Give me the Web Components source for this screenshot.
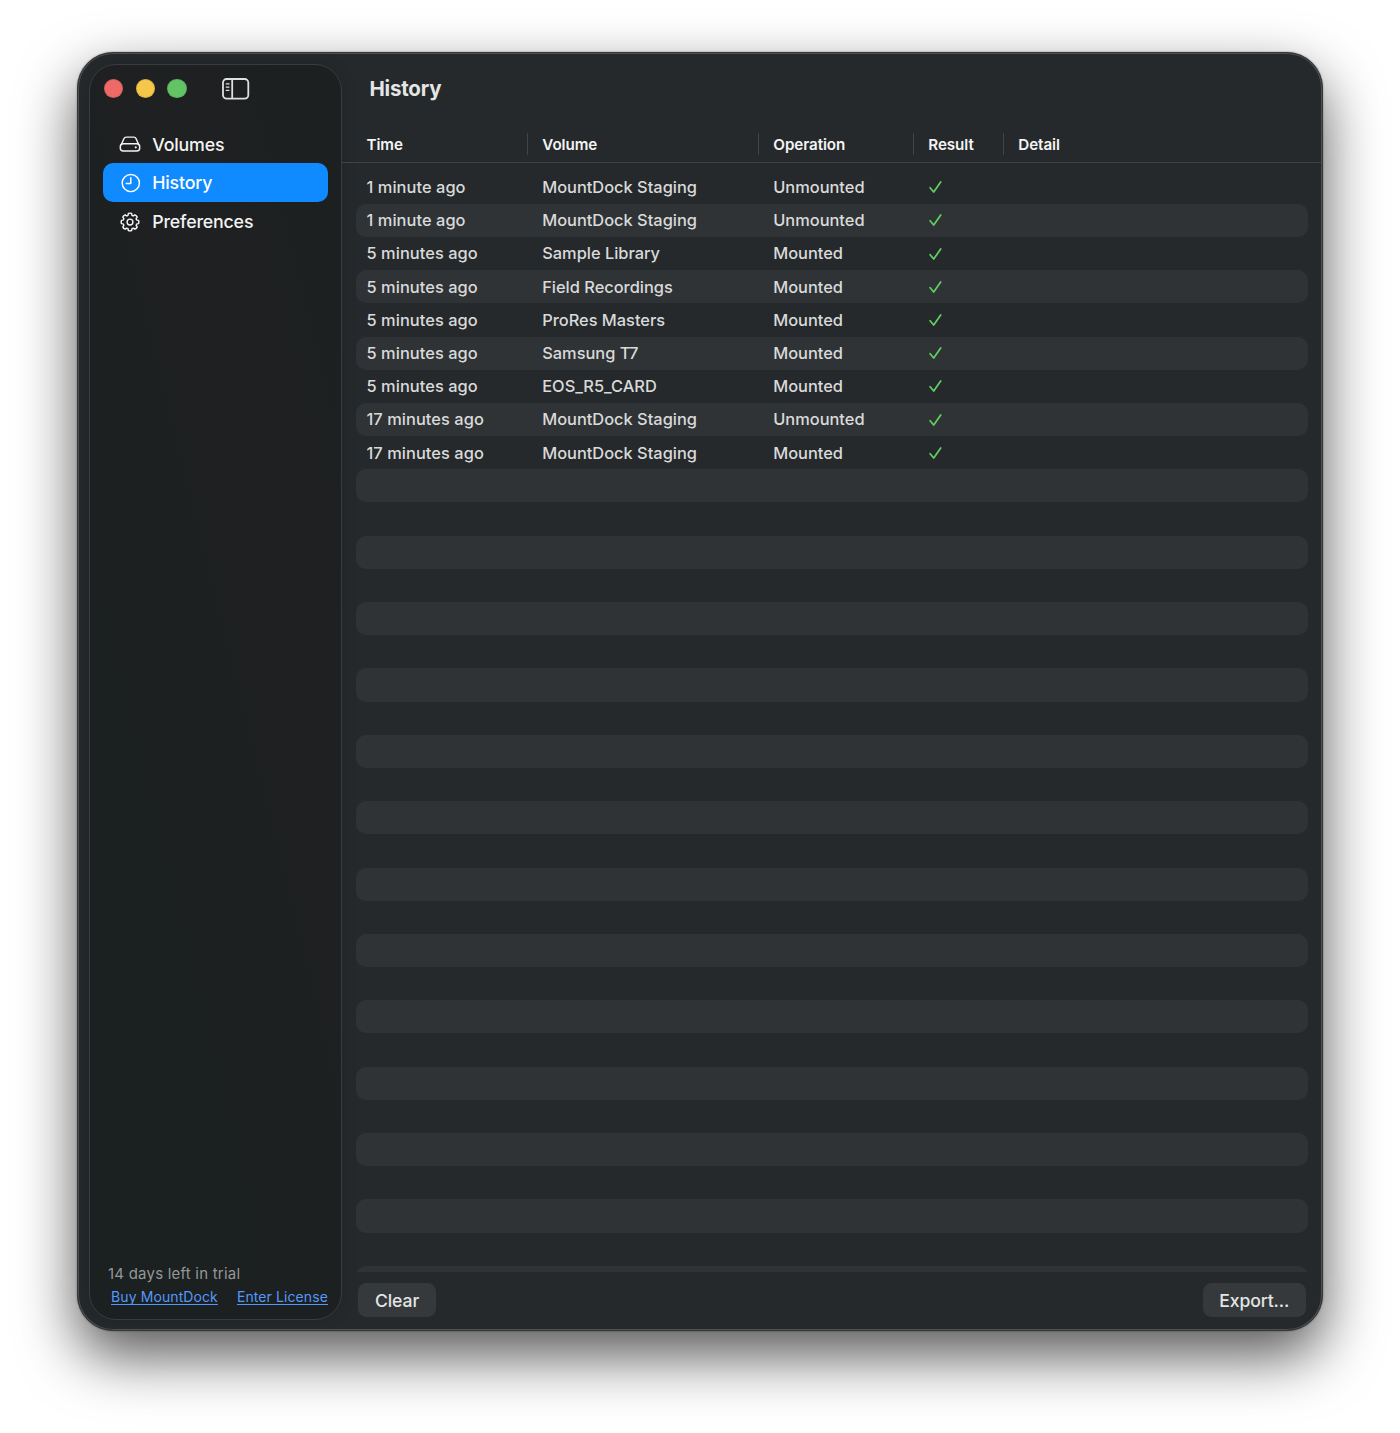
<!DOCTYPE html>
<html lang="en">
<head>
<meta charset="utf-8">
<title>MountDock</title>
<style>
html,body{margin:0;background:#fff}
body{width:1400px;height:1433px;overflow:hidden;font-family:Inter,"Liberation Sans",sans-serif;color:#dedfdf;-webkit-font-smoothing:antialiased}
</style>
</head>
<body>
<app-window>
  <side-bar slot="sidebar">
    <side-item icon="drive">Volumes</side-item>
    <side-item icon="clock" selected>History</side-item>
    <side-item icon="gear">Preferences</side-item>
    <trial-note slot="footer"></trial-note>
  </side-bar>
  <span slot="title">History</span>
  <history-table></history-table>
  <push-button slot="actions" style="--w:77.5px">Clear</push-button>
  <push-button slot="actions" style="--w:102.5px">Export...</push-button>
</app-window>
<script>
const define = (name, html, init) => customElements.define(name, class extends HTMLElement {
  constructor() {
    super();
    this.attachShadow({mode: 'open'}).innerHTML = html;
  }
  connectedCallback() { if (init) init(this, this.shadowRoot); }
});

define('app-window', `<style>
:host{display:block;padding:52px 77px 0}
.win{box-sizing:border-box;width:1246px;height:1279px;border-radius:36px;background:#25292b;display:flex;overflow:hidden;border:1px solid #33373a;
 box-shadow:inset 0 0 0 1px #4d5152,0 25px 58px rgba(0,0,0,.66),0 0 2px rgba(0,0,0,.4)}
.win ::slotted([slot=sidebar]){flex:none;margin:11px 0 10px 11px}
main{flex:1;min-width:0;display:flex;flex-direction:column}
h1{margin:0;height:73px;padding-left:27.5px;font-size:20.5px;font-weight:700;line-height:71px;color:#e4e5e5;letter-spacing:-.2px}
::slotted(history-table){flex:none;margin-right:1px}
footer{display:flex;justify-content:space-between;padding:11px 16.5px 0 16.3px}
</style>
<div class="win"><slot name="sidebar"></slot><main><h1><slot name="title"></slot></h1><slot></slot><footer><slot name="actions"></slot></footer></main></div>`);

define('side-bar', `<style>
:host{display:flex;flex-direction:column;box-sizing:border-box;width:253px;border:1px solid #383c3e;border-radius:27px;
 background:linear-gradient(76deg,#1b2021 0%,#1c2021 48%,#1f2021 62%,#1e2021 74%,#1c2021 100%);box-shadow:0 0 16px rgba(0,0,0,.12)}
.bar{display:flex;align-items:center;height:47px;padding-left:13.9px;gap:12.4px}
.bar i{width:19.4px;height:19.4px;border-radius:50%;box-sizing:border-box;border:1px solid rgba(0,0,0,.1)}
.bar svg{margin-left:22.3px}
nav{display:flex;flex-direction:column;padding:12.8px 13px 0 12.5px}
.foot{margin-top:auto}
</style>
<div class="bar"><i style="background:#ee6a66"></i><i style="background:#f5c84a"></i><i style="background:#63c466"></i>
<svg width="28" height="22" viewBox="0 0 28 22" fill="none" stroke="#dfe0e0" stroke-width="1.8"><rect x="1" y="1" width="25.3" height="19.6" rx="3.6"/><path d="M10.2 1v19.6"/><path d="M4.2 5.9h2.8M4.2 9.1h2.8M4.2 12.3h2.8" stroke-width="1.2" stroke-linecap="round"/></svg></div>
<nav><slot></slot></nav><div class="foot"><slot name="footer"></slot></div>`);

const gearPath = (() => {
  const p = [];
  const at = (r, a) => (11 + r * Math.cos(a)).toFixed(2) + ' ' + (11 + r * Math.sin(a)).toFixed(2);
  for (let k = 0; k < 8; k++) {
    const a = k * Math.PI / 4;
    p.push((k ? 'L' : 'M') + at(7.1, a - .27), 'L' + at(8.7, a - .19), 'Q' + at(9.2, a) + ' ' + at(8.7, a + .19), 'L' + at(7.1, a + .27), 'Q' + at(6.7, a + .39) + ' ' + at(7.1, a + .515));
  }
  return p.join('') + 'Z';
})();
const icons = {
  drive: '<path d="M2 12.2 5 5.5Q5.6 4.1 7.2 4.1h7.6q1.6 0 2.2 1.4l3 6.7"/><rect x="1.3" y="10.7" width="19.4" height="7.3" rx="3"/><circle cx="16.8" cy="14.4" r=".8" fill="#fff" stroke-width=".5"/>',
  clock: '<circle cx="11.8" cy="11" r="8.6"/><path d="M11.8 5.6V11.4H7.2" stroke-linecap="round" stroke-linejoin="round"/>',
  gear: `<path d="${gearPath}" stroke-linejoin="round"/><circle cx="11" cy="11" r="2.9"/>`
};
define('side-item', `<style>
:host{display:flex;align-items:center;height:38.7px;border-radius:10px;padding-left:16px;font-size:17.8px;font-weight:500;color:#f2f3f3;letter-spacing:-.18px}
:host([selected]){background:#108aff;color:#fff}
svg{margin-right:11.7px;flex:none}
span{line-height:22px;padding-top:.8px}
</style><svg width="22" height="22" viewBox="0 0 22 22" fill="none" stroke="currentColor" stroke-width="1.45"></svg><span><slot></slot></span>`,
(el, root) => { root.querySelector('svg').innerHTML = icons[el.getAttribute('icon')]; });

define('trial-note', `<style>
:host{display:block;padding:0 13px 11px 18px;color:#949797;font-size:15px}
p{margin:0;line-height:22px;height:22.6px;letter-spacing:.22px}
div{display:flex;justify-content:space-between;padding-left:3px;line-height:22px;font-size:14px;letter-spacing:.1px}
a{color:#5598fb;text-decoration:underline;text-underline-offset:2px;text-decoration-skip-ink:none;white-space:nowrap}
</style><p>14 days left in trial</p><div><a>Buy MountDock</a><a>Enter License</a></div>`);

define('push-button', `<style>
:host{display:block;width:var(--w);height:33.5px;border-radius:8.5px;background:#35393b;color:#e4e5e5;font-size:17.6px;font-weight:500;line-height:35px;text-align:center;letter-spacing:-.1px}
</style><slot></slot>`);

const ms = 'MountDock Staging', un = 'Unmounted', mo = 'Mounted', five = '5 minutes ago';
const records = [
  ['1 minute ago', ms, un], ['1 minute ago', ms, un], [five, 'Sample Library', mo], [five, 'Field Recordings', mo],
  [five, 'ProRes Masters', mo], [five, 'Samsung T7', mo], [five, 'EOS_R5_CARD', mo],
  ['17 minutes ago', ms, un], ['17 minutes ago', ms, mo]
];
define('history-row', `<style>
:host{display:grid;grid-template-columns:171px 231px 155px 90px 1fr;height:33.19px;align-items:center;border-radius:10px;font-size:16.4px;font-weight:450;color:#d9dada}
:host(:nth-child(even)){background:#2f3335}
span{padding-left:15.5px;white-space:nowrap;line-height:20px;margin-top:-.2px}
span:first-of-type{padding-left:10.8px;letter-spacing:.06px}
svg{margin-left:15px;display:block}
</style>`, (el, root) => {
  if (!el.record) return;
  for (const text of el.record) {
    const s = document.createElement('span');
    s.textContent = text;
    root.append(s);
  }
  const t = document.createElement('template');
  t.innerHTML = '<svg width="15" height="16" viewBox="0 0 15 16" fill="none" stroke="#62cd63" stroke-width="1.75" stroke-linecap="round" stroke-linejoin="round"><path d="M2.1 8.7 5.7 13 12.7 3"/></svg>';
  root.append(t.content);
});
define('history-table', `<style>
:host{display:block}
header{display:grid;grid-template-columns:185px 231px 155px 90px 1fr;height:36px;align-items:center;border-bottom:1px solid #404446;font-size:15.2px;font-weight:600;color:#f4f4f4}
header b{font-weight:inherit;line-height:24px;height:21.5px;padding-left:14.3px;border-left:1px solid #414547;letter-spacing:-.08px}
header b:first-child{border:0;padding-left:24.5px}
.body{height:1109px;box-sizing:border-box;padding:7.6px 12.8px 0 13.7px;overflow:hidden}
</style>
<header><b>Time</b><b>Volume</b><b>Operation</b><b>Result</b><b>Detail</b></header><div class="body"></div>`,
(el, root) => {
  const body = root.querySelector('.body');
  for (let i = 0; i < 34; i++) {
    const row = document.createElement('history-row');
    row.record = records[i];
    body.append(row);
  }
});
</script>
</body>
</html>
